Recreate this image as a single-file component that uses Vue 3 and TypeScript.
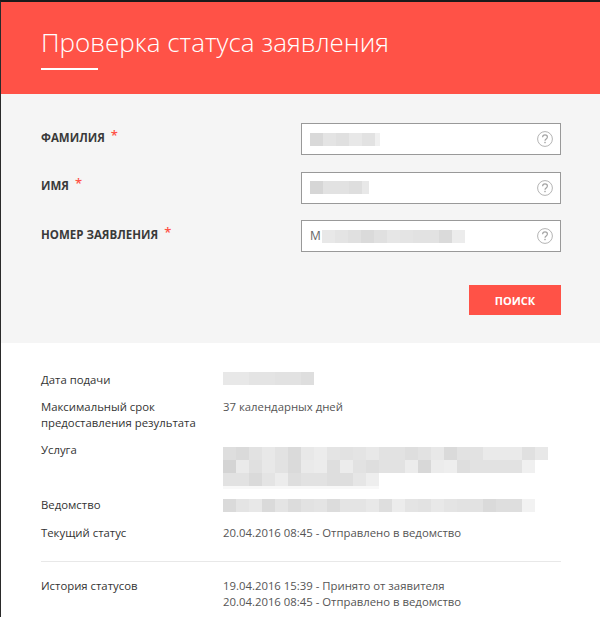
<script setup lang="ts">
interface Field {
  label: string;
  prefix?: string;
  width: number;
  blur: number[];
}

// grey tones of the pixelated (hidden) values
const fields: Field[] = [
  { label: "Фамилия", width: 70, blur: [217, 228, 224, 232, 226, 240] },
  { label: "Имя", width: 59, blur: [214, 226, 226, 222, 232] },
  { label: "Номер заявления", prefix: "M", width: 143, blur: [232, 228, 224, 218, 224, 230, 228, 226, 226, 218, 236] },
];

const dateBlur = [232, 232, 228, 228, 226, 226, 222];
const serviceBlur = [
  [222, 218, 226, 232, 226, 218, 232, 236, 228, 226, 228, 232, 226, 226, 222, 226, 232, 218, 226, 226, 234, 234, 234, 224, 232],
  [212, 234, 224, 232, 226, 218, 234, 236, 222, 236, 226, 222, 226, 226, 236, 216, 236, 238, 222, 226, 226, 226, 226, 240],
  [226, 226, 218, 228, 236, 222, 226, 226, 222, 222, 230, 238],
];
const agencyBlur = [218, 228, 232, 218, 228, 220, 226, 228, 220, 228, 228, 232, 222, 236, 228, 226, 232, 228, 226, 226, 218, 222, 222, 242];

function tone(v: number): string {
  return `rgb(${v}, ${v}, ${v})`;
}
</script>

<template>
  <div class="page">
    <header class="head">
      <h1>Проверка статуса заявления</h1>
    </header>

    <form class="search" @submit.prevent>
      <div v-for="f in fields" :key="f.label" class="field">
        <label>{{ f.label }} <i>*</i></label>
        <div class="input">
          <span v-if="f.prefix" class="prefix">{{ f.prefix }}</span>
          <span class="mosaic" :style="{ width: f.width + 'px' }">
            <b v-for="(v, i) in f.blur" :key="i" :style="{ background: tone(v) }"></b>
          </span>
          <svg class="help" width="16" height="16" viewBox="0 0 16 16" fill="none">
            <circle cx="8" cy="8" r="7.4" stroke="#b4b4b4" />
            <path d="M5.6 6.2c0-1.4 1.1-2.3 2.4-2.3s2.4.9 2.4 2.2c0 1.8-2.4 1.8-2.4 3.6" stroke="#a4a4a4" stroke-width="1.2" />
            <rect x="7.3" y="10.8" width="1.4" height="1.4" fill="#a4a4a4" />
          </svg>
        </div>
      </div>
      <div class="actions">
        <button type="submit">Поиск</button>
      </div>
    </form>

    <section class="details">
      <div class="row first">
        <span class="key">Дата подачи</span>
        <span class="mosaic"><b v-for="(v, i) in dateBlur" :key="i" :style="{ background: tone(v) }"></b></span>
      </div>
      <div class="row">
        <span class="key">Максимальный срок<br />предоставления результата</span>
        <span class="val">37 календарных дней</span>
      </div>
      <div class="row service">
        <span class="key">Услуга</span>
        <div class="blur-lines">
          <span v-for="(line, n) in serviceBlur" :key="n" class="mosaic">
            <b v-for="(v, i) in line" :key="i" :style="{ background: tone(v) }"></b>
          </span>
          <div class="blur-tail"></div>
        </div>
      </div>
      <div class="row agency">
        <span class="key">Ведомство</span>
        <span class="mosaic"><b v-for="(v, i) in agencyBlur" :key="i" :style="{ background: tone(v) }"></b></span>
      </div>
      <div class="row">
        <span class="key">Текущий статус</span>
        <span class="val">20.04.2016 08:45 - Отправлено в ведомство</span>
      </div>
      <hr />
      <div class="row">
        <span class="key">История статусов</span>
        <span class="val">19.04.2016 15:39 - Принято от заявителя<br />20.04.2016 08:45 - Отправлено в ведомство</span>
      </div>
    </section>
  </div>
</template>

<style>
html,
body {
  margin: 0;
  background: #fff;
}
</style>

<style scoped>
.page {
  width: 600px;
  height: 617px;
  overflow: hidden;
  border-top: 2px solid #1a1a1a;
  border-left: 1px solid #2a2a2a;
  box-sizing: border-box;
  font-family: "Open Sans", "Noto Sans", sans-serif;
  font-size: 11.35px;
  line-height: 16px;
  color: #333;
}
.head {
  height: 92px;
  box-sizing: border-box;
  padding: 24px 40px 0;
  background: #ff5247;
}
h1 {
  display: inline-block;
  margin: 0;
  padding-bottom: 12px;
  font-size: 26px;
  line-height: 32px;
  font-weight: 300;
  color: #fff;
  position: relative;
}
h1::after {
  content: "";
  position: absolute;
  left: 0;
  bottom: 0;
  width: 57px;
  height: 2px;
  background: #fff;
}
.search {
  height: 249px;
  box-sizing: border-box;
  padding: 29px 39px 0 40px;
  background: #f5f5f5;
}
.field {
  display: flex;
  align-items: center;
  justify-content: space-between;
  height: 32px;
  margin-bottom: 16.5px;
}
label {
  padding-bottom: 4px;
  font-weight: 700;
  font-size: 11.5px;
  text-transform: uppercase;
  color: #3a3a3a;
}
label i {
  position: relative;
  top: -2px;
  margin-left: 3px;
  font-style: normal;
  font-size: 13px;
  font-weight: 600;
  color: #ff5247;
}
.input {
  display: flex;
  align-items: center;
  width: 260px;
  height: 32px;
  box-sizing: border-box;
  padding: 0 7px 0 8px;
  background: #fff;
  border: 1px solid #999;
  font-size: 12px;
  color: #666;
}
.prefix {
  width: 12px;
}
.help {
  margin-left: auto;
}
.mosaic {
  display: flex;
  overflow: hidden;
}
.mosaic b {
  display: block;
  flex: none;
  width: 13px;
  height: 13px;
}
.actions {
  display: flex;
  justify-content: flex-end;
  margin-top: 33px;
}
button {
  width: 92px;
  height: 30px;
  padding: 0;
  border: 0;
  background: #ff5247;
  color: #fff;
  font-family: inherit;
  font-size: 11px;
  font-weight: 700;
  text-transform: uppercase;
}
.details {
  padding: 29px 39px 0 40px;
}
.row {
  display: grid;
  grid-template-columns: 182px 1fr;
  margin-bottom: 12px;
}
.first {
  margin-bottom: 11px;
}
.service {
  margin-top: -1px;
  margin-bottom: 8px;
}
.blur-lines {
  padding-top: 5px;
}
.blur-tail {
  width: 156px;
  height: 3px;
  background: #f8f8f8;
}
.agency .mosaic {
  margin-top: 2px;
}
.val {
  color: #555;
}
hr {
  margin: 20px 0 16px;
  border: 0;
  border-top: 1px solid #e8e8e8;
}
</style>
